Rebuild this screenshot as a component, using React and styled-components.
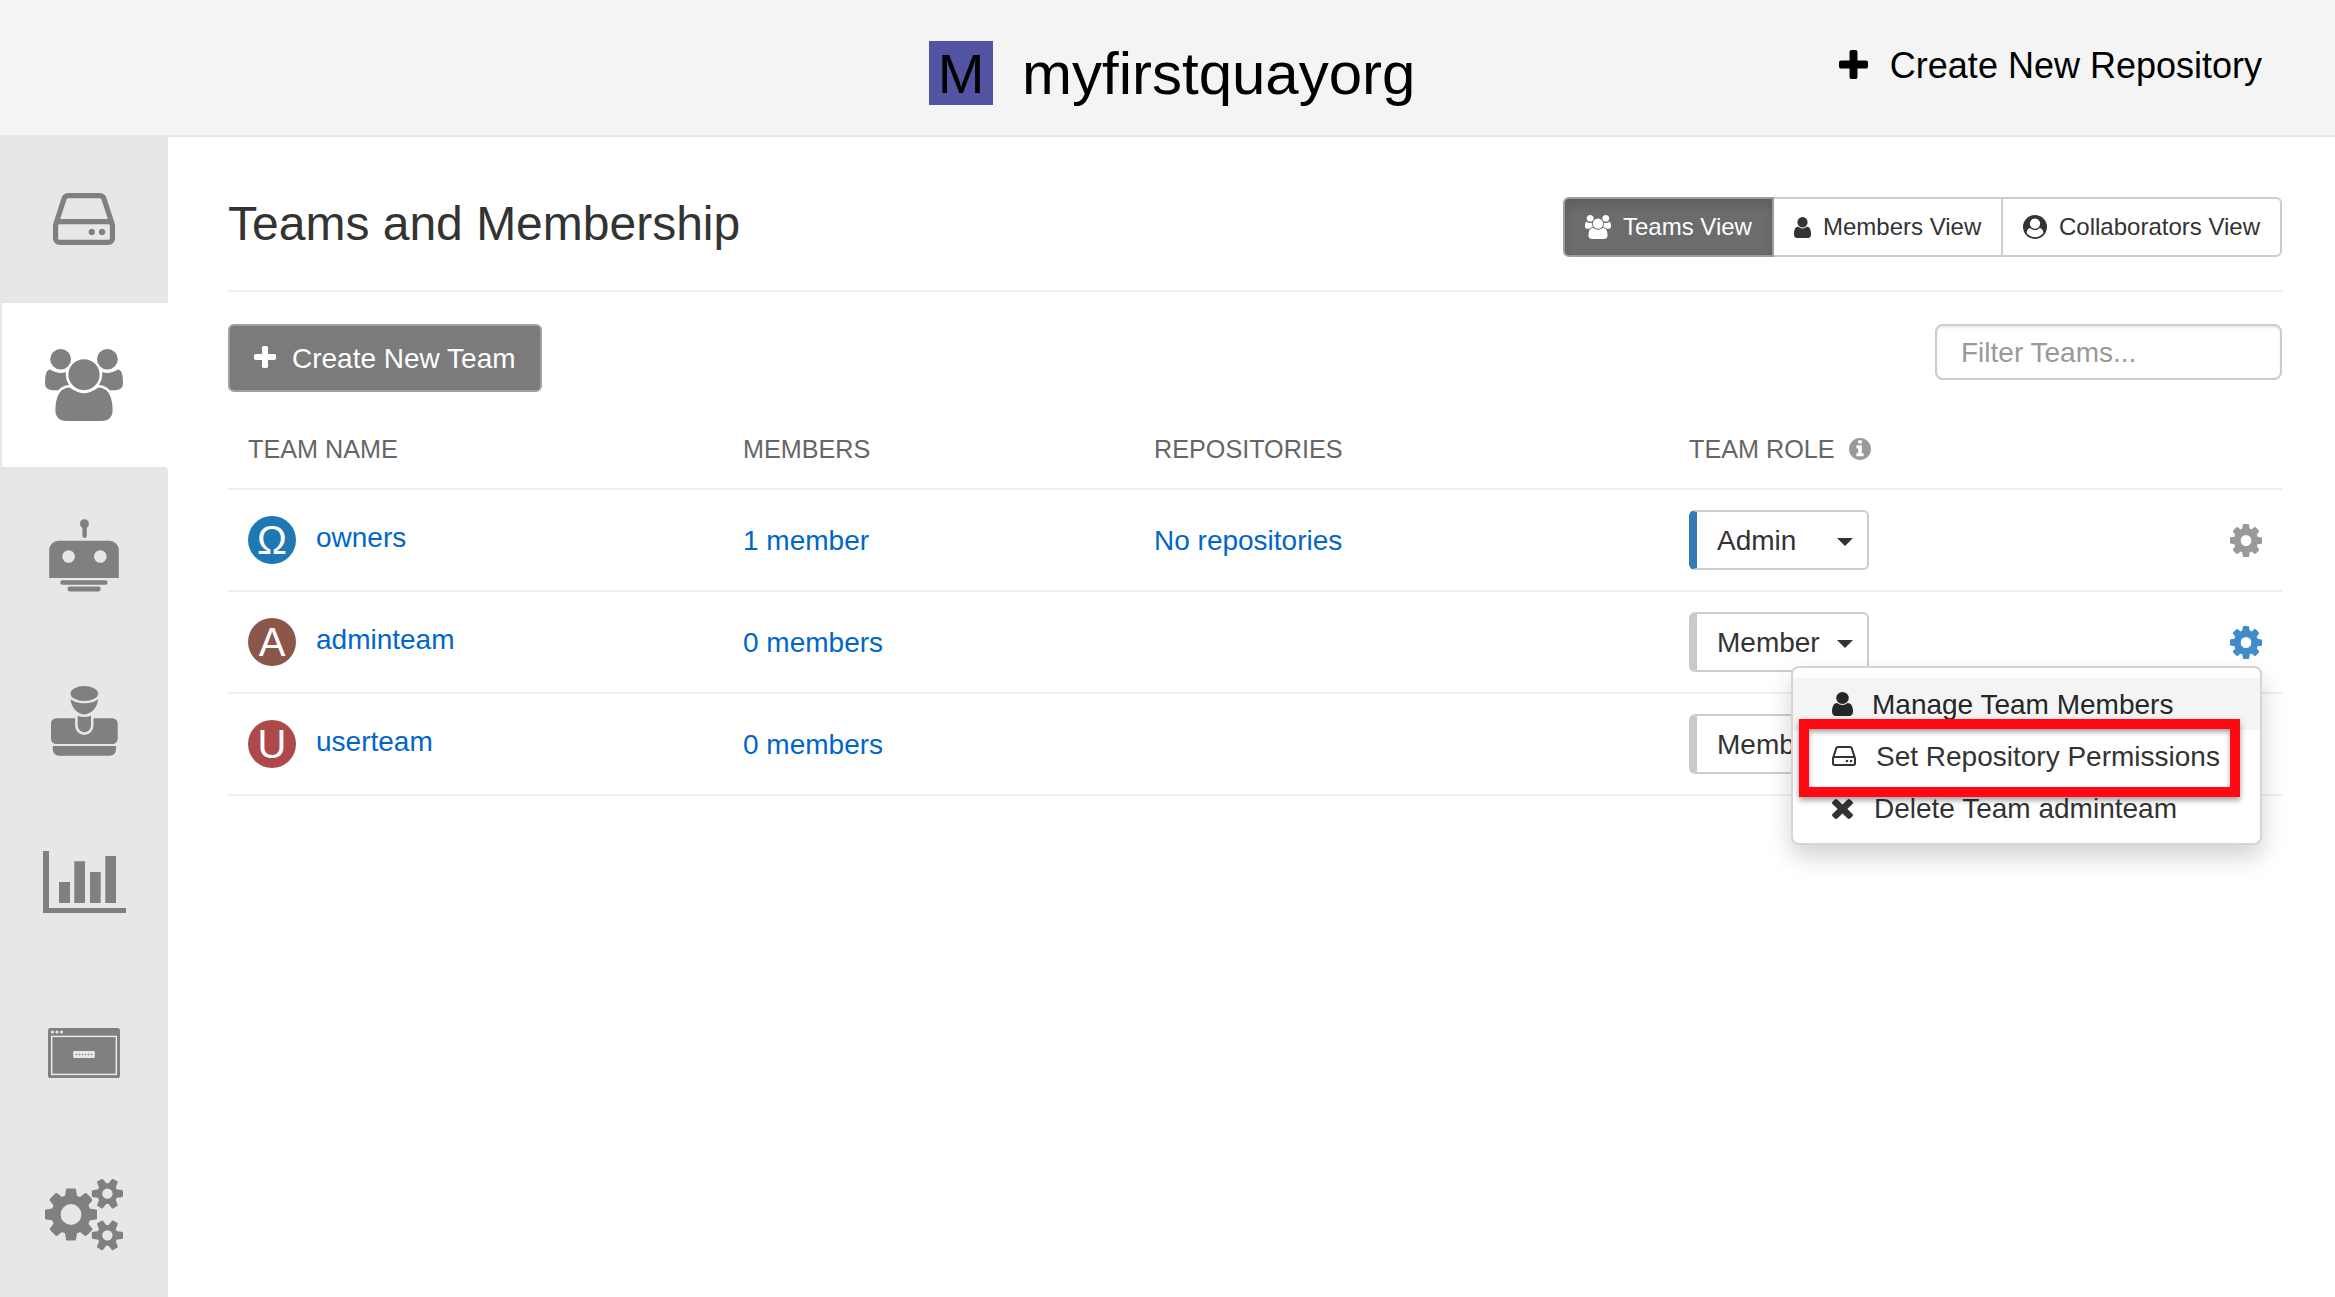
import React from 'react';
import styled, { createGlobalStyle, css } from 'styled-components';

const colors = {
  text: '#333',
  link: '#0066cc',
  gray: '#808080',
  line: '#eeeeee',
  border: '#cccccc',
  sidebar: '#e7e7e7',
  tabLine: '#dde7ee',
};

const GlobalStyle = createGlobalStyle`
  *, *::before, *::after {
    box-sizing: border-box;
  }
  body {
    margin: 0;
    background: #fff;
    color: ${colors.text};
    font-family: 'Liberation Sans', Arial, sans-serif;
    font-size: 28px;
    line-height: 40px;
  }
`;

const icons = {
  plus: {
    box: '192 128 1408 1408',
    d:
      'M1600 736v192q0 40-28 68t-68 28h-416v416q0 40-28 68t-68 28h-192q-40 0-68-28t-28-68v-416h-416q-40 0-68-28t-28-68v-192q0-40 28-68t68-28h416v-416q0-40 28-68t68-28h192q40 0 68 28t28 68v416h416q40 0 68 28t28 68z',
  },
  cog: {
    box: '128 128 1536 1536',
    d:
      'M1152 896q0-106-75-181t-181-75-181 75-75 181 75 181 181 75 181-75 75-181zm512-109v222q0 12-8 23t-20 13l-185 28q-19 54-39 91 35 50 107 138 10 12 10 25t-9 23q-27 37-99 108t-94 71q-12 0-26-9l-138-108q-44 23-91 38-16 136-29 186-7 28-36 28h-222q-14 0-24.5-8.5t-11.5-21.5l-28-184q-49-16-90-37l-141 107q-10 9-25 9-14 0-25-11-126-114-165-168-7-10-7-23 0-12 8-23 15-21 51-66.5t54-70.5q-27-50-41-99l-183-27q-13-2-21-12.5t-8-23.5v-222q0-12 8-23t19-13l186-28q14-46 39-92-40-57-107-138-10-12-10-24 0-10 9-23 26-36 98.5-107.5t94.5-71.5q13 0 26 10l138 107q44-23 91-38 16-136 29-186 7-28 36-28h222q14 0 24.5 8.5t11.5 21.5l28 184q49 16 90 37l142-107q9-9 24-9 13 0 25 10 129 119 165 170 7 8 7 22 0 12-8 23-15 21-51 66.5t-54 70.5q26 50 41 98l183 28q13 2 21 12.5t8 23.5z',
  },
  cogs: {
    box: '0 64 1920 1792',
    d:
      'M896 960q0-106-75-181t-181-75-181 75-75 181 75 181 181 75 181-75 75-181zm768 512q0-52-38-90t-90-38-90 38-38 90q0 53 37.5 90.5t90.5 37.5 90.5-37.5 37.5-90.5zm0-1024q0-52-38-90t-90-38-90 38-38 90q0 53 37.5 90.5t90.5 37.5 90.5-37.5 37.5-90.5zm-384 421v185q0 10-7 19.5t-16 10.5l-155 24q-11 35-32 76 34 48 90 115 7 11 7 20 0 12-7 19-23 30-82.5 89.5t-78.5 59.5q-11 0-21-7l-115-90q-37 19-77 31-11 108-23 155-7 24-30 24h-186q-11 0-20-7.5t-10-17.5l-23-153q-34-10-75-31l-118 89q-7 7-20 7-11 0-21-8-144-133-144-160 0-9 7-19 10-14 41-53t47-61q-23-44-35-82l-152-24q-10-1-17-9.5t-7-19.5v-185q0-10 7-19.5t16-10.5l155-24q11-35 32-76-34-48-90-115-7-11-7-20 0-12 7-20 22-30 82-89t79-59q11 0 21 7l115 90q34-18 77-32 11-108 23-154 7-24 30-24h186q11 0 20 7.5t10 17.5l23 153q34 10 75 31l118-89q8-7 20-7 11 0 21 8 144 133 144 160 0 8-7 19-12 16-42 54t-45 60q23 48 34 82l152 23q10 2 17 10.5t7 19.5zm640 533v140q0 16-149 31-12 27-30 52 51 113 51 138 0 4-4 7-122 71-124 71-8 0-46-47t-52-68q-20 2-30 2t-30-2q-14 21-52 68t-46 47q-2 0-124-71-4-3-4-7 0-25 51-138-18-25-30-52-149-15-149-31v-140q0-16 149-31 13-29 30-52-51-113-51-138 0-4 4-7 4-2 35-20t59-34 30-16q8 0 46 46.5t52 67.5q20-2 30-2t30 2q51-71 92-112l6-2q4 0 124 70 4 3 4 7 0 25-51 138 17 23 30 52 149 15 149 31zm0-1024v140q0 16-149 31-12 27-30 52 51 113 51 138 0 4-4 7-122 71-124 71-8 0-46-47t-52-68q-20 2-30 2t-30-2q-14 21-52 68t-46 47q-2 0-124-71-4-3-4-7 0-25 51-138-18-25-30-52-149-15-149-31v-140q0-16 149-31 13-29 30-52-51-113-51-138 0-4 4-7 4-2 35-20t59-34 30-16q8 0 46 46.5t52 67.5q20-2 30-2t30 2q51-71 92-112l6-2q4 0 124 70 4 3 4 7 0 25-51 138 17 23 30 52 149 15 149 31z',
  },
  users: {
    box: '64 0 1920 1792',
    d:
      'M657 896q-162 5-265 128h-134q-82 0-138-40.5t-56-118.5q0-353 124-353 6 0 43.5 21t97.5 42.5 119 21.5q67 0 133-23-5 37-5 66 0 139 81 256zm1071 637q0 120-73 189.5t-194 69.5h-874q-121 0-194-69.5t-73-189.5q0-53 3.5-103.5t14-109 26.5-108.5 43-97.5 62-81 85.5-53.5 111.5-20q10 0 43 21.5t73 48 107 48 135 21.5 135-21.5 107-48 73-48 43-21.5q61 0 111.5 20t85.5 53.5 62 81 43 97.5 26.5 108.5 14 109 3.5 103.5zm-1024-1277q0 106-75 181t-181 75-181-75-75-181 75-181 181-75 181 75 75 181zm704 384q0 159-112.5 271.5t-271.5 112.5-271.5-112.5-112.5-271.5 112.5-271.5 271.5-112.5 271.5 112.5 112.5 271.5zm576 225q0 78-56 118.5t-138 40.5h-134q-103-123-265-128 81-117 81-256 0-29-5-66 66 23 133 23 59 0 119-21.5t97.5-42.5 43.5-21q124 0 124 353zm-128-609q0 106-75 181t-181 75-181-75-75-181 75-181 181-75 181 75 75 181z',
  },
  user: {
    box: '256 128 1280 1536',
    d:
      'M1536 1399q0 109-62.5 187t-150.5 78h-854q-88 0-150.5-78t-62.5-187q0-85 8.5-160.5t31.5-152 58.5-131 94-89 134.5-34.5q131 128 313 128t313-128q76 0 134.5 34.5t94 89 58.5 131 31.5 152 8.5 160.5zm-256-887q0 159-112.5 271.5t-271.5 112.5-271.5-112.5-112.5-271.5 112.5-271.5 271.5-112.5 271.5 112.5 112.5 271.5z',
  },
  userCircle: {
    box: '0 0 1792 1792',
    d:
      'M1523 1339q-22-155-87.5-257.5t-184.5-118.5q-67 74-159.5 115.5t-195.5 41.5-195.5-41.5-159.5-115.5q-119 16-184.5 118.5t-87.5 257.5q106 150 271 237.5t356 87.5 356-87.5 271-237.5zm-243-699q0-159-112.5-271.5t-271.5-112.5-271.5 112.5-112.5 271.5 112.5 271.5 271.5 112.5 271.5-112.5 112.5-271.5zm512 256q0 182-71 347.5t-190.5 286-285.5 191.5-349 71q-182 0-348-71t-286-191-191-286-71-348 71-348 191-286 286-191 348-71 348 71 286 191 191 286 71 348z',
  },
  hdd: {
    box: '128 256 1536 1280',
    d:
      'M1168 1216q0 33-23.5 56.5t-56.5 23.5-56.5-23.5-23.5-56.5 23.5-56.5 56.5-23.5 56.5 23.5 23.5 56.5zm256 0q0 33-23.5 56.5t-56.5 23.5-56.5-23.5-23.5-56.5 23.5-56.5 56.5-23.5 56.5 23.5 23.5 56.5zm112 160v-320q0-13-9.5-22.5t-22.5-9.5h-1216q-13 0-22.5 9.5t-9.5 22.5v320q0 13 9.5 22.5t22.5 9.5h1216q13 0 22.5-9.5t9.5-22.5zm-1230-480h1180l-157-482q-4-13-16-21.5t-26-8.5h-782q-14 0-26 8.5t-16 21.5zm1358 160v320q0 66-47 113t-113 47h-1216q-66 0-113-47t-47-113v-320q0-25 16-75l197-606q17-53 63-86t101-33h782q55 0 101 33t63 86l197 606q16 50 16 75z',
  },
  times: {
    box: '302 366 1188 1188',
    d:
      'M1490 1322q0 40-28 68l-136 136q-28 28-68 28t-68-28l-294-294-294 294q-28 28-68 28t-68-28l-136-136q-28-28-28-68t28-68l294-294-294-294q-28-28-28-68t28-68l136-136q28-28 68-28t68 28l294 294 294-294q28-28 68-28t68 28l136 136q28 28 28 68t-28 68l-294 294 294 294q28 28 28 68z',
  },
  info: {
    box: '128 128 1536 1536',
    d:
      'M1152 1376v-160q0-14-9-23t-23-9h-96v-512q0-14-9-23t-23-9h-320q-14 0-23 9t-9 23v160q0 14 9 23t23 9h96v320h-96q-14 0-23 9t-9 23v160q0 14 9 23t23 9h448q14 0 23-9t9-23zm-128-896v-160q0-14-9-23t-23-9h-192q-14 0-23 9t-9 23v160q0 14 9 23t23 9h192q14 0 23-9t9-23zm640 416q0 209-103 385.5t-279.5 279.5-385.5 103-385.5-103-279.5-279.5-103-385.5 103-385.5 279.5-279.5 385.5-103 385.5 103 279.5 279.5 103 385.5z',
  },
};

const StyledSvg = styled.svg`
  display: block;
  flex: none;
  fill: currentColor;
  margin-top: ${props => props.$drop || 0}px;
`;

const Icon = ({ name, width, height, drop }) => (
  <StyledSvg
    width={width}
    height={height}
    viewBox={icons[name].box}
    preserveAspectRatio="none"
    $drop={drop}>
    <path d={icons[name].d} />
  </StyledSvg>
);

const RobotIcon = () => (
  <StyledSvg width="70" height="73" viewBox="0 0 70 73" $drop={8}>
    <circle cx="35.4" cy="4.7" r="4.5" />
    <rect x="33.4" y="4.7" width="4.4" height="14.3" rx="2.2" />
    <path
      fillRule="evenodd"
      d="M9.5 21.7h51a9.3 9.3 0 0 1 9.3 9.3v28H.2V31a9.3 9.3 0 0 1 9.3-9.3zM19.6 31.2a6.3 6.3 0 1 0 0 12.6 6.3 6.3 0 0 0 0-12.6zM51.3 31.2a6.3 6.3 0 1 0 0 12.6 6.3 6.3 0 0 0 0-12.6z"
    />
    <rect x="11.2" y="61.2" width="47.4" height="4.6" rx="2.3" />
    <rect x="18.5" y="67.6" width="33.2" height="4.8" rx="2.4" />
  </StyledSvg>
);

const StampIcon = () => (
  <StyledSvg width="67" height="70" viewBox="0 0 67 70" $drop={8}>
    <ellipse cx="33.3" cy="7.5" rx="13.8" ry="7.5" />
    <path d="M19.6 13C24 18.6 42.600 18.600 47 13C47 20 40.500 28.500 33.300 28.500S19.600 20 19.600 13z" />
    <path d="M5.300 32.300H24.100V39.700A9.200 9.200 0 0 0 42.500 39.700V32.300H61.400A5.300 5.300 0 0 1 66.700 37.600V52.700A5.300 5.300 0 0 1 61.400 58H5.300A5.300 5.300 0 0 1 0 52.700V37.600A5.300 5.300 0 0 1 5.300 32.300z" />
    <path d="M26.700 29.800Q33.300 32.300 40 29.800V39.500A6.650 6.650 0 0 1 26.700 39.500z" />
    <path d="M1.800 60H65V63.500A6.200 6.200 0 0 1 58.800 69.700H8A6.200 6.200 0 0 1 1.800 63.500z" />
  </StyledSvg>
);

const ChartIcon = () => (
  <StyledSvg width="83" height="62" viewBox="0 0 83 62" $drop={-2}>
    <path d="M0 0h6v57h77v5H0zM16 31h11v21H16zM31.300 10.300H42V52H31.300zM47 21h10.700v31H47zM62.300 5H73v47H62.300z" />
  </StyledSvg>
);

const WindowIcon = () => (
  <StyledSvg width="72" height="50" viewBox="0 0 72 50" $drop={8}>
    <rect width="72" height="50" rx="2.600" />
    <g fill={colors.sidebar}>
      <circle cx="4.400" cy="4" r="1.600" />
      <circle cx="9" cy="4" r="1.600" />
      <circle cx="13.500" cy="4" r="1.600" />
      <rect x="25.200" y="23" width="21.600" height="7" rx="1.200" />
    </g>
    <rect x="3.700" y="8.400" width="64.600" height="38" fill="none" stroke="#ececec" strokeWidth="1.400" />
    {[28.4, 31.4, 34.4, 37.4, 40.5, 43.6].map(x => (
      <circle key={x} cx={x} cy="26.500" r="0.800" />
    ))}
  </StyledSvg>
);

const Header = styled.header`
  display: flex;
  align-items: flex-start;
  justify-content: space-between;
  height: 137px;
  padding: 0 73px 0 929px;
  background: #f4f4f4;
  border-bottom: 2px solid ${colors.sidebar};
  color: #000;
`;

const OrgTitle = styled.h1`
  display: flex;
  align-items: flex-start;
  gap: 29px;
  height: 64px;
  margin: 41px 0 0;
  font-size: 60px;
  font-weight: normal;
  line-height: 66px;
`;

const OrgAvatar = styled.span`
  width: 64px;
  height: 64px;
  background: #5254a3;
  font-size: 56px;
  line-height: 65px;
  text-align: center;
`;

const CreateRepository = styled.a`
  display: flex;
  align-items: center;
  gap: 22px;
  margin-top: 46px;
  font-size: 36px;
`;

const Page = styled.div`
  display: flex;
  height: 1160px;
`;

const Sidebar = styled.nav`
  width: 168px;
  background: ${colors.sidebar};
  padding-left: 2px;
  overflow: hidden;
`;

const Tab = styled.a`
  display: flex;
  align-items: center;
  justify-content: center;
  height: 166px;
  border-bottom: 2px solid ${colors.tabLine};
  border-right: 2px solid ${colors.tabLine};
  color: ${colors.gray};
  ${props =>
    props.$active &&
    css`
      background: #fff;
      border-right-color: #fff;
    `}
`;

const Main = styled.main`
  flex: 1;
  padding: 0 53px 0 60px;
`;

const TitleBar = styled.div`
  display: flex;
  align-items: flex-start;
  justify-content: space-between;
  height: 155px;
  border-bottom: 2px solid ${colors.line};
`;

const Title = styled.h2`
  margin: 59px 0 0;
  font-size: 48px;
  font-weight: normal;
  line-height: 56px;
`;

const ViewToggle = styled.div`
  display: flex;
  height: 60px;
  margin-top: 60px;
`;

const ViewButton = styled.button`
  display: flex;
  align-items: center;
  gap: ${props => props.$gap}px;
  width: ${props => props.$width}px;
  margin: 0 0 0 -2px;
  padding: 0 0 0 20px;
  border: 2px solid ${colors.border};
  background: #fff;
  color: ${colors.text};
  font: 24px 'Liberation Sans', Arial, sans-serif;
  white-space: nowrap;
  &:last-child {
    border-radius: 0 6px 6px 0;
  }
  ${props =>
    props.$active &&
    css`
      position: relative;
      border-color: #9d9d9d;
      border-radius: 6px 0 0 6px;
      background: #6c6c6c;
      color: #fff;
      box-shadow: inset 0 6px 10px rgba(0, 0, 0, 0.125);
    `}
`;

const Toolbar = styled.div`
  display: flex;
  align-items: flex-start;
  justify-content: space-between;
  padding-top: 32px;
`;

const CreateTeam = styled.button`
  display: flex;
  align-items: center;
  gap: 16px;
  width: 314px;
  height: 68px;
  padding: 2px 0 0 24px;
  border: 2px solid #a0a0a0;
  border-radius: 6px;
  background: #7b7b7b;
  color: #fff;
  font: 28px 'Liberation Sans', Arial, sans-serif;
`;

const FilterInput = styled.input`
  width: 347px;
  height: 56px;
  padding: 2px 24px 0;
  border: 2px solid ${colors.border};
  border-radius: 8px;
  box-shadow: inset 0 2px 2px rgba(0, 0, 0, 0.075);
  font: 28px 'Liberation Sans', Arial, sans-serif;
  &::placeholder {
    color: #999;
    opacity: 1;
  }
`;

const Row = styled.div`
  display: grid;
  grid-template-columns: 495px 411px 535px 1fr;
  align-items: center;
  height: 102px;
  padding: 0 20px;
  border-bottom: 2px solid ${colors.line};
`;

const HeadRow = styled(Row)`
  height: 98px;
  padding-top: 18px;
  color: #666;
  font-size: 25.2px;
`;

const HeadCell = styled.div`
  display: flex;
  align-items: center;
  gap: 14px;
`;

const InfoMark = styled.span`
  color: #999;
`;

const TeamCell = styled.div`
  display: flex;
  align-items: center;
  gap: 20px;
`;

const TeamAvatar = styled.span`
  width: 48px;
  height: 48px;
  border-radius: 50%;
  background: ${props => props.$color};
  color: #fff;
  font-size: 40px;
  line-height: 48px;
  text-align: center;
`;

const Link = styled.a`
  padding-top: 2px;
  color: ${colors.link};
`;

const TeamLink = styled(Link)`
  margin-top: -6px;
`;

const RoleButton = styled.button`
  display: flex;
  align-items: center;
  justify-content: space-between;
  width: 180px;
  height: 60px;
  padding: 2px 14px 0 20px;
  border: 2px solid ${colors.border};
  border-left: 8px solid ${props => props.$accent};
  border-radius: 6px;
  background: #fff;
  color: ${colors.text};
  font: 28px 'Liberation Sans', Arial, sans-serif;
`;

const Caret = styled.span`
  margin-top: 2px;
  border-top: 8px solid ${colors.text};
  border-left: 8px solid transparent;
  border-right: 8px solid transparent;
`;

const RowActions = styled.div`
  display: flex;
  align-items: center;
  justify-content: space-between;
`;

const Options = styled.div`
  position: relative;
  color: ${props => (props.$open ? '#428bca' : '#999')};
`;

const Menu = styled.ul`
  position: absolute;
  z-index: 2;
  top: 40px;
  right: 0;
  width: 471px;
  margin: 0;
  padding: 10px 0 9px;
  border: 2px solid #d5d5d5;
  border-radius: 8px;
  background: #fff;
  box-shadow: 0 12px 24px rgba(0, 0, 0, 0.175);
  list-style: none;
`;

const MenuItem = styled.li`
  display: flex;
  align-items: center;
  height: 52px;
  padding: 2px 0 0 39px;
  color: ${props => (props.$hover ? '#262626' : colors.text)};
  background: ${props => (props.$hover ? '#f4f4f4' : 'transparent')};
  white-space: nowrap;
`;

const MenuIcon = styled.span`
  display: flex;
  width: ${props => props.$width}px;
`;

const Highlight = styled.div`
  position: absolute;
  top: 51px;
  left: 6px;
  width: 441px;
  height: 78px;
  border: 10px solid #ff0a12;
  box-shadow: 0 3px 6px rgba(0, 0, 0, 0.4), inset 0 3px 5px rgba(0, 0, 0, 0.35);
`;

const teams = [
  {
    name: 'owners',
    letter: 'Ω',
    color: '#1f77b4',
    members: '1 member',
    repositories: 'No repositories',
    role: 'Admin',
    accent: '#337ab7',
  },
  {
    name: 'adminteam',
    letter: 'A',
    color: '#8c564b',
    members: '0 members',
    role: 'Member',
    accent: '#c9c9c9',
    open: true,
  },
  {
    name: 'userteam',
    letter: 'U',
    color: '#ad494a',
    members: '0 members',
    role: 'Member',
    accent: '#c9c9c9',
  },
];

const TeamMenu = () => (
  <Menu>
    <MenuItem $hover>
      <MenuIcon $width={40}>
        <Icon name="user" width={21} height={24} drop={-2} />
      </MenuIcon>
      Manage Team Members
    </MenuItem>
    <MenuItem>
      <MenuIcon $width={44}>
        <Icon name="hdd" width={24} height={20} drop={-2} />
      </MenuIcon>
      Set Repository Permissions
    </MenuItem>
    <MenuItem>
      <MenuIcon $width={42}>
        <Icon name="times" width={21} height={20} />
      </MenuIcon>
      Delete Team adminteam
    </MenuItem>
    <Highlight />
  </Menu>
);

const TeamRow = ({ team }) => (
  <Row>
    <TeamCell>
      <TeamAvatar $color={team.color}>{team.letter}</TeamAvatar>
      <TeamLink>{team.name}</TeamLink>
    </TeamCell>
    <Link>{team.members}</Link>
    <Link>{team.repositories}</Link>
    <RowActions>
      <RoleButton $accent={team.accent}>
        {team.role}
        <Caret />
      </RoleButton>
      <Options $open={team.open}>
        <Icon name="cog" width={32} height={33} />
        {team.open && <TeamMenu />}
      </Options>
    </RowActions>
  </Row>
);

const App = () => (
  <>
    <GlobalStyle />
    <Header>
      <OrgTitle>
        <OrgAvatar>M</OrgAvatar>
        myfirstquayorg
      </OrgTitle>
      <CreateRepository>
        <Icon name="plus" width={29} height={29} drop={-4} />
        Create New Repository
      </CreateRepository>
    </Header>
    <Page>
      <Sidebar>
        <Tab>
          <Icon name="hdd" width={62} height={52} />
        </Tab>
        <Tab $active>
          <Icon name="users" width={78} height={72} />
        </Tab>
        <Tab>
          <RobotIcon />
        </Tab>
        <Tab>
          <StampIcon />
        </Tab>
        <Tab>
          <ChartIcon />
        </Tab>
        <Tab>
          <WindowIcon />
        </Tab>
        <Tab>
          <Icon name="cogs" width={78} height={73} drop={-2} />
        </Tab>
      </Sidebar>
      <Main>
        <TitleBar>
          <Title>Teams and Membership</Title>
          <ViewToggle>
            <ViewButton $active $width={211} $gap={12}>
              <Icon name="users" width={26} height={24} />
              Teams View
            </ViewButton>
            <ViewButton $width={231} $gap={12}>
              <Icon name="user" width={17} height={21} />
              Members View
            </ViewButton>
            <ViewButton $width={281} $gap={12}>
              <Icon name="userCircle" width={24} height={24} />
              Collaborators View
            </ViewButton>
          </ViewToggle>
        </TitleBar>
        <Toolbar>
          <CreateTeam>
            <Icon name="plus" width={22} height={22} drop={-4} />
            Create New Team
          </CreateTeam>
          <FilterInput placeholder="Filter Teams..." />
        </Toolbar>
        <HeadRow>
          <HeadCell>TEAM NAME</HeadCell>
          <HeadCell>MEMBERS</HeadCell>
          <HeadCell>REPOSITORIES</HeadCell>
          <HeadCell>
            TEAM ROLE
            <InfoMark>
              <Icon name="info" width={22} height={22} />
            </InfoMark>
          </HeadCell>
        </HeadRow>
        {teams.map(team => (
          <TeamRow key={team.name} team={team} />
        ))}
      </Main>
    </Page>
  </>
);

export default App;
